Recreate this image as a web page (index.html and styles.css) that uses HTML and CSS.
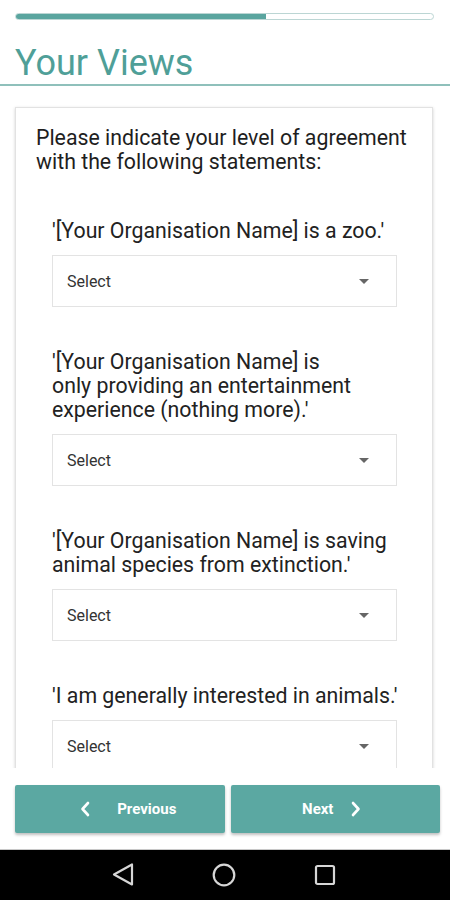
FILE: index.html
```html
<!DOCTYPE html>
<html>
<head>
<meta charset="utf-8">
<link rel="stylesheet" href="styles.css">
</head>
<body>
<div class="screen">
  <header class="header">
    <div class="progress"><div class="progress-fill" style="width: 60%"></div></div>
    <h1 class="title">Your Views</h1>
  </header>
  <main class="scroll">
    <section class="card">
      <p class="intro">Please indicate your level of agreement with the following statements:</p>
      <div class="item">
        <p class="statement">'[Your Organisation Name] is a zoo.'</p>
        <div class="select"><span class="select-text">Select</span><span class="caret"></span></div>
      </div>
      <div class="item">
        <p class="statement">'[Your Organisation Name] is<br>only providing an entertainment experience (nothing more).'</p>
        <div class="select"><span class="select-text">Select</span><span class="caret"></span></div>
      </div>
      <div class="item">
        <p class="statement">'[Your Organisation Name] is saving animal species from extinction.'</p>
        <div class="select"><span class="select-text">Select</span><span class="caret"></span></div>
      </div>
      <div class="item">
        <p class="statement">'I am generally interested in animals.'</p>
        <div class="select"><span class="select-text">Select</span><span class="caret"></span></div>
      </div>
    </section>
  </main>
  <footer class="footer">
    <button class="btn btn-prev">
      <svg class="chev" width="10" height="16" viewBox="0 0 10 16"><path d="M8 2 L2.5 8 L8 14" fill="none" stroke="#fff" stroke-width="2.6" stroke-linecap="round" stroke-linejoin="round"/></svg>
      <span>Previous</span>
    </button>
    <button class="btn btn-next">
      <span>Next</span>
      <svg class="chev" width="10" height="16" viewBox="0 0 10 16"><path d="M2 2 L7.5 8 L2 14" fill="none" stroke="#fff" stroke-width="2.6" stroke-linecap="round" stroke-linejoin="round"/></svg>
    </button>
  </footer>
  <nav class="navbar">
    <svg width="22" height="24" viewBox="0 0 22 24"><path d="M2 11.5 L20 1.5 L20 21.5 Z" fill="none" stroke="#d6d6d6" stroke-width="2.2" stroke-linejoin="round"/></svg>
    <svg width="24" height="24" viewBox="0 0 24 24"><circle cx="12" cy="12" r="10.3" fill="none" stroke="#d6d6d6" stroke-width="2.2"/></svg>
    <svg width="22" height="22" viewBox="0 0 22 22"><rect x="2" y="2" width="18" height="18" rx="1.5" fill="none" stroke="#d6d6d6" stroke-width="2.2"/></svg>
  </nav>
</div>
</body>
</html>
```

FILE: styles.css
```css
* { box-sizing: border-box; }
html, body { margin: 0; padding: 0; }
body {
  font-family: Roboto, "Liberation Sans", Arial, sans-serif;
  background: #fff;
  color: #212121;
}
.screen {
  width: 450px;
  height: 900px;
  display: flex;
  flex-direction: column;
  overflow: hidden;
}
.header { flex: none; }
.progress {
  margin: 13px 16px 0 15px;
  height: 7px;
  border: 1px solid #bcd6d4;
  border-radius: 4px;
  background: #fff;
  overflow: hidden;
}
.progress-fill {
  height: 100%;
  background: #5aa59f;
}
.title {
  margin: 22px 0 0 0;
  padding-left: 15px;
  height: 44px;
  font-size: 36px;
  line-height: 42px;
  font-weight: 400;
  color: #4f9f98;
  border-bottom: 2px solid #8fc0bb;
}
.scroll {
  flex: 1;
  overflow: hidden;
  padding: 21px 17px 0 15px;
}
.card {
  border: 1px solid #e2e2e2;
  border-bottom: none;
  box-shadow: 0 1px 3px rgba(0,0,0,0.18);
  background: #fff;
  padding: 18px 18px 40px 20px;
  min-height: 700px;
}
.intro {
  margin: 0;
  font-size: 21.3px;
  line-height: 24px;
  color: #1e1e1e;
}
.item { margin-top: 45px; padding: 0 17px 0 16px; }
.item + .item { margin-top: 43px; }
.statement {
  margin: 0 -12px 0 0;
  font-size: 21.3px;
  line-height: 24px;
  color: #222;
}
.select {
  margin-top: 12px;
  height: 52px;
  border: 1px solid #e3e3e3;
  display: flex;
  align-items: center;
  justify-content: space-between;
  padding: 0 27px 0 14px;
  background: #fff;
}
.select-text {
  font-size: 16px;
  color: #333;
}
.caret {
  width: 0;
  height: 0;
  border-left: 5px solid transparent;
  border-right: 5px solid transparent;
  border-top: 5px solid #666;
}
.footer {
  flex: none;
  height: 82px;
  padding: 17px 10px 16px 15px;
  display: flex;
  gap: 6px;
  background: #fff;
  border-bottom: 1px solid #c8c8c8;
}
.btn {
  width: 210px;
  height: 48px;
  border: none;
  border-radius: 2px;
  background: #5ba8a2;
  color: #fff;
  font-family: Roboto, "Liberation Sans", Arial, sans-serif;
  font-size: 15px;
  font-weight: 700;
  display: flex;
  align-items: center;
  justify-content: center;
  box-shadow: 0 2px 3px rgba(0,0,0,0.25);
  padding: 0;
}
.btn-prev { gap: 27px; padding-left: 17px; }
.btn-next { gap: 18px; padding-right: 7px; }
.chev { display: block; }
.navbar {
  flex: none;
  height: 50px;
  background: #000;
  display: flex;
  align-items: center;
  justify-content: center;
  gap: 78px;
  padding-right: 2px;
}
.navbar svg { display: block; }
```
